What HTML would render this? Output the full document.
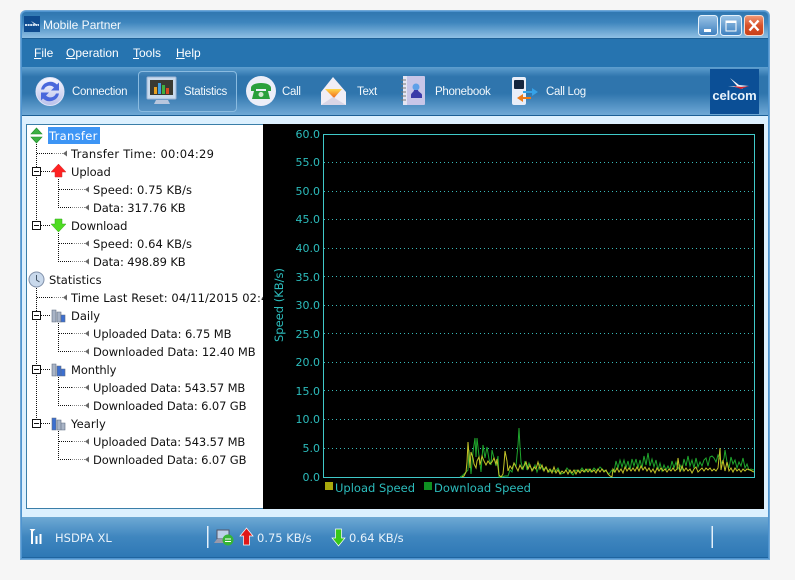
<!DOCTYPE html>
<html><head><meta charset="utf-8"><style>
html,body{margin:0;padding:0;width:795px;height:580px;overflow:hidden;background:#f6f6f6}
body{position:relative;font-family:"Liberation Sans",sans-serif}
div{position:absolute;box-sizing:border-box}
.t{white-space:nowrap;line-height:18px;height:18px;color:#111;font-family:"DejaVu Sans",sans-serif;font-size:11.5px}
.m{white-space:nowrap;color:#fff;font-size:12px;line-height:16px;top:45px}
.b{white-space:nowrap;color:#f2f8fc;font-size:11.5px;line-height:16px;top:84px;letter-spacing:-.3px}
.y{white-space:nowrap;color:#2cbcbc;font-family:"DejaVu Sans",sans-serif;font-size:11px;line-height:14px;width:60px;left:260px;text-align:right;margin-top:1px}
.l{font-size:11.5px;margin-top:0}
.s{white-space:nowrap;color:#e8f2fa;font-family:"DejaVu Sans",sans-serif;font-size:11.5px;line-height:16px;top:530px}
</style></head><body>
<div style="left:20px;top:10px;width:750px;height:550px;background:#4f94cf;border:1px solid #6fa7d6;border-radius:6px 6px 0 0"></div>
<div style="left:22px;top:12px;width:746px;height:26px;background:linear-gradient(#3077b0,#3d85bd 40%,#8fc0e4);border-radius:4px 4px 0 0"></div>
<div style="left:22px;top:38px;width:746px;height:1px;background:#1c5f95"></div>
<div style="left:22px;top:39px;width:746px;height:28px;background:#2674b0"></div>
<div style="left:22px;top:67px;width:746px;height:48px;background:linear-gradient(#5f9fcf,#2f75ad 20%,#2f75ad 55%,#6fa9d6)"></div>
<div style="left:22px;top:115px;width:746px;height:1px;background:#1c5f95"></div>
<div style="left:22px;top:116px;width:746px;height:401px;background:#dcf0fe"></div>
<div style="left:22px;top:517px;width:746px;height:41px;background:linear-gradient(#6ea9d4,#3f86bf 50%,#2e78b5);border-bottom:1px solid #1f649f"></div>
<div style="left:26px;top:124px;width:238px;height:385px;background:#fff;border:1px solid #3a7ea8;border-right:0"></div>
<div style="left:263px;top:124px;width:501px;height:385px;background:#000"></div>
<div style="left:138px;top:71px;width:99px;height:41px;border:1px solid #8abbe0;border-radius:4px;background:rgba(70,130,180,.35)"></div>
<div style="left:24px;top:16px;width:16px;height:16px;background:#0f4c90"></div>

<div class="m" style="left:43px;top:17px;color:#f4f9fd">Mobile Partner</div>
<div class="m" style="left:34px"><u>F</u>ile</div>
<div class="m" style="left:66px"><u>O</u>peration</div>
<div class="m" style="left:133px"><u>T</u>ools</div>
<div class="m" style="left:176px"><u>H</u>elp</div>
<div class="b" style="left:72px">Connection</div>
<div class="b" style="left:184px">Statistics</div>
<div class="b" style="left:282px">Call</div>
<div class="b" style="left:357px">Text</div>
<div class="b" style="left:435px">Phonebook</div>
<div class="b" style="left:546px">Call Log</div>

<div style="left:710px;top:69px;width:49px;height:45px;background:#0b4f96"></div>
<div style="left:710px;top:88px;width:49px;text-align:center;color:#e9f3fb;font-size:13px;line-height:16px;font-weight:bold;letter-spacing:-.1px">celcom</div>

<svg style="position:absolute;left:0;top:0" width="795" height="580" viewBox="0 0 795 580">
<defs>
<linearGradient id="gb" x1="0" y1="0" x2="0" y2="1"><stop offset="0" stop-color="#9cc4e6"/><stop offset="1" stop-color="#3c7fbf"/></linearGradient>
<linearGradient id="gr" x1="0" y1="0" x2="0" y2="1"><stop offset="0" stop-color="#f29a78"/><stop offset=".5" stop-color="#d8522a"/><stop offset="1" stop-color="#c93f17"/></linearGradient>
<linearGradient id="gs" x1="0" y1="0" x2="0" y2="1"><stop offset="0" stop-color="#f8f8ff"/><stop offset="1" stop-color="#b9c0ea"/></linearGradient>
<linearGradient id="ge" x1="0" y1="0" x2="0" y2="1"><stop offset="0" stop-color="#ffd84a"/><stop offset="1" stop-color="#f0661a"/></linearGradient>
</defs>
<!-- title logo -->
<path d="M31 21l5 3 3 1-4 0z" fill="#e8eef6"/>
<path d="M25 25h14" stroke="#cfe0f0" stroke-width="2" stroke-dasharray="2 .6"/>
<!-- window buttons -->
<rect x="698.500" y="15.500" width="19" height="20" rx="3" fill="url(#gb)" stroke="#e4f0fa"/>
<rect x="704" y="29" width="7" height="3" fill="#fff"/>
<rect x="720.500" y="15.500" width="21" height="20" rx="3" fill="url(#gb)" stroke="#e4f0fa"/>
<rect x="726" y="21" width="10" height="10" fill="none" stroke="#fff"/><rect x="726" y="21" width="10" height="2" fill="#fff"/>
<rect x="744.500" y="15.500" width="19" height="20" rx="3" fill="url(#gr)" stroke="#f3d9cf"/>
<path d="M749.500 20.500l9 10M758.500 20.500l-9 10" stroke="#fff" stroke-width="2.400"/>
<!-- connection -->
<circle cx="50" cy="91.500" r="14" fill="url(#gs)" stroke="#dfe3f7"/>
<path d="M41 89.500a9.500 9.500 0 0 1 16-5l2-2v8h-8l3-3a6 6 0 0 0-10 2z" fill="#4a68dc"/>
<path d="M59 93.500a9.500 9.500 0 0 1-16 5l-2 2v-8h8l-3 3a6 6 0 0 0 10-2z" fill="#4a68dc"/>
<!-- statistics -->
<rect x="147" y="77" width="29" height="22" rx="1" fill="#c9dbee" stroke="#9fb6d4"/>
<rect x="150" y="80" width="23" height="15" fill="#3a3a32"/>
<rect x="154" y="87" width="3" height="7" fill="#e8a020"/><rect x="158" y="83" width="3" height="11" fill="#3f9fe0"/><rect x="162" y="85" width="3" height="9" fill="#40b040"/><rect x="166" y="88" width="3" height="6" fill="#d84a20"/>
<path d="M156 100h12l2 4h-16z" fill="#b8c6dd"/>
<!-- call -->
<circle cx="261" cy="91" r="15" fill="#eceef8"/>
<path d="M251 88c0-3 4-5 10-5s10 2 10 5v3h-5v-2h-10v2h-5z" fill="#2aa03c"/>
<path d="M254 91h14l2 8h-18z" fill="#2aa03c"/>
<circle cx="261" cy="94.500" r="2.500" fill="#cfe8cf"/>
<!-- text -->
<path d="M321 92l12-15 13 15v13h-25z" fill="#f1eef6"/>
<path d="M325 89h17l-8 9z" fill="url(#ge)"/>
<path d="M321 105l12-8 13 8z" fill="#d9d6e6"/>
<!-- phonebook -->
<rect x="403" y="76" width="22" height="29" rx="1" fill="#c8c6e8"/>
<rect x="403" y="76" width="4" height="29" fill="#e5e5f2"/>
<path d="M401 80h5M401 84h5M401 88h5M401 92h5M401 96h5M401 100h5" stroke="#777" stroke-width="1"/>
<circle cx="416" cy="87" r="3.500" fill="#5fa0e8"/><path d="M411 98v-3c0-2 3-3 3-5h4c0 2 4 3 4 5v3z" fill="#3b3ba8"/>
<!-- call log -->
<rect x="512" y="77" width="14" height="28" rx="2" fill="#e9eef8"/>
<rect x="514" y="80" width="10" height="9" rx="1" fill="#15263f"/>
<path d="M523 91h9v-3l6 4-6 4v-3h-9z" fill="#35a2e8"/>
<path d="M531 97h-8v-3l-6 4 6 4v-3h8z" fill="#ee7a18"/>
<!-- celcom bird -->
<path d="M730 78l9 7 10 1-9 1 3 2-8-2-7 0 9-1z" fill="#f4f4f8"/>
<path d="M733 86l9 1 7-1-8 3z" fill="#d8202a"/>

<!-- tree lines -->
<g stroke="#111" fill="none" stroke-dasharray="1 1" shape-rendering="crispEdges">
<path d="M36.500 144V168M36.500 177V222M36.500 288V312M36.500 321V366M36.500 375V420"/>
<path d="M37 153.500H52"/><path d="M37 297.500H52"/>
<path d="M41 171.500H50M41 225.500H50M41 315.500H50M41 369.500H50M41 423.500H50"/>
<path d="M58.500 179V207.500H72M59 189.500H72M58.500 233V261.500H72M59 243.500H72M58.500 323V351.500H72M59 333.500H72M58.500 377V405.500H72M59 387.500H72M58.500 431V459.500H72M59 441.500H72"/>
</g>
<g stroke="#888" fill="none" stroke-dasharray="1 1" shape-rendering="crispEdges">
<path d="M52 153.500H63M52 297.500H63M72 189.500H85M72 207.500H85M72 243.500H85M72 261.500H85M72 333.500H85M72 351.500H85M72 387.500H85M72 405.500H85M72 441.500H85M72 459.500H85"/>
</g>
<g fill="#666">
<path d="M63 153.500l4-3v6zM63 297.500l4-3v6z"/>
<path d="M85 189.500l4-3v6zM85 207.500l4-3v6zM85 243.500l4-3v6zM85 261.500l4-3v6zM85 333.500l4-3v6zM85 351.500l4-3v6zM85 387.500l4-3v6zM85 405.500l4-3v6zM85 441.500l4-3v6zM85 459.500l4-3v6z"/>
</g>
<g fill="#fff" stroke="#111" shape-rendering="crispEdges">
<rect x="32.500" y="167.500" width="8" height="8"/><rect x="32.500" y="221.500" width="8" height="8"/><rect x="32.500" y="311.500" width="8" height="8"/><rect x="32.500" y="365.500" width="8" height="8"/><rect x="32.500" y="419.500" width="8" height="8"/>
<path d="M34 171.500h5M34 225.500h5M34 315.500h5M34 369.500h5M34 423.500h5" fill="none"/>
</g>
<!-- transfer icon -->
<path d="M36.500 128l5.500 6h-11z" fill="#3cb043" stroke="#1f8f2a" stroke-width=".6"/>
<path d="M36.500 143l5.500-6h-11z" fill="#3cb043" stroke="#1f8f2a" stroke-width=".6"/>
<!-- upload / download -->
<path d="M58.500 164l7.500 8h-4v5h-7v-5h-4z" fill="#f22" stroke="#c33" stroke-width=".5"/>
<path d="M58.500 232l7.500-8h-4v-5h-7v5h-4z" fill="#4fdc22" stroke="#2fa518" stroke-width=".5"/>
<!-- clock -->
<circle cx="36.500" cy="279.500" r="7.500" fill="#c9d9ec" stroke="#7f8fa8"/>
<path d="M36.500 275v5l3 2" stroke="#456" fill="none"/>
<!-- bar icons -->
<g stroke="#5f6b80" stroke-width=".6">
<path d="M52 322v-12h4v12zM57 322v-10h4v10z" fill="#a9b4c6"/><path d="M61 322v-7h4v7z" fill="#3c6fd0"/>
<path d="M52 376v-12h4v12z" fill="#a9b4c6"/><path d="M57 376v-10h4v10zM61 376v-7h4v7z" fill="#3c6fd0"/>
<path d="M52 430v-12h4v12z" fill="#3c6fd0"/><path d="M57 430v-10h4v10zM61 430v-7h4v7z" fill="#a9b4c6"/>
</g>

<!-- chart -->
<rect x="323.500" y="134.500" width="431" height="343" fill="none" stroke="#3fc9c9"/>
<g stroke="#39b8b8" stroke-dasharray="1 3" shape-rendering="crispEdges">
<path d="M324 162.500H754M324 191.500H754M324 219.500H754M324 248.500H754M324 276.500H754M324 305.500H754M324 333.500H754M324 362.500H754M324 390.500H754M324 419.500H754M324 448.500H754"/>
</g>
<polyline fill="none" stroke="#1fa52c" stroke-width="1" points="460,477 462,476 464,474 466,472 468,470 469,450 471,474 473,452 475,438 476,457 477,438 479,456 481,472 483,445 485,458 487,447 489,459 491,465 492,450 494,458 496,466 498,456 499,477 501,477 505,476 508,476 510,470 512,472 514,463 516,466 518,445 519,428 520,447 521,462 523,470 525,461 527,470 529,463 531,468 533,470 535,465 537,472 540,464 543,470 546,467 549,472 552,470 555,472 558,468 561,474 564,473 567,468 570,472 573,475 576,470 579,472 582,468 585,472 588,469 591,472 594,468 597,471 600,467 603,470 606,471 609,474 612,470 614,472 616,461 618,468 620,460 622,467 624,460 626,468 628,461 630,470 632,459 634,466 636,459 638,468 640,460 642,468 644,456 646,465 648,453 650,466 652,459 654,467 656,460 658,470 660,463 662,471 664,465 666,470 668,466 670,470 672,461 674,468 676,462 678,469 680,465 682,470 684,459 686,466 688,456 690,466 692,460 694,468 696,458 698,467 700,462 702,466 704,460 706,458 708,466 710,457 712,456 714,458 716,462 718,455 720,459 722,464 724,458 725,450 727,462 729,468 731,457 733,464 735,460 737,468 739,462 741,466 743,458 745,468 747,464 749,470 751,469 754,470"/>
<polyline fill="none" stroke="#c4c428" stroke-width="1" points="462,477 464,476 466,472 467,462 468,442 470,468 471,452 473,458 474,464 476,468 477,461 479,457 480,465 482,456 484,461 486,465 488,461 490,464 492,462 494,458 496,464 497,459 499,475 501,477 503,474 504,464 505,451 507,461 508,471 510,466 512,469 514,463 516,467 518,471 520,465 522,469 524,466 526,462 528,469 530,465 532,471 534,467 536,469 538,462 540,469 542,465 544,471 546,467 548,472 550,469 552,473 554,467 556,473 558,470 560,474 562,471 564,473 566,470 568,474 570,470 572,473 574,470 576,474 578,470 580,473 582,470 584,472 586,469 588,472 590,469 592,472 594,470 596,473 598,469 600,472 602,469 604,472 606,470 608,474 610,476 612,477 613,469 615,472 617,468 619,472 621,469 623,473 625,467 627,471 629,468 631,471 633,468 635,471 637,467 639,471 641,466 643,470 645,467 647,471 649,468 651,472 653,469 655,473 657,468 659,471 661,468 663,471 665,469 667,472 669,469 671,471 673,468 675,471 677,469 678,458 680,472 682,466 684,471 686,468 688,471 690,469 692,473 694,469 696,467 698,472 700,470 702,468 704,471 706,468 708,470 710,468 712,471 714,469 716,471 718,468 720,448 721,470 723,460 725,471 727,462 729,471 731,468 733,472 735,468 737,471 739,469 741,472 743,469 745,471 747,469 750,470 754,472"/>
<rect x="325" y="482" width="8" height="8" fill="#a8a80c"/>
<rect x="424" y="482" width="8" height="8" fill="#0f8f22"/>
<!-- status -->
<path d="M29.500 529h6l-3 3z" fill="#fff"/>
<path d="M32 530v14M36.500 544v-8M40.500 544v-10" stroke="#fff" stroke-width="2"/>
<rect x="207" y="526" width="1.500" height="22" fill="#e4f0fa"/>
<rect x="711.500" y="526" width="1.500" height="22" fill="#e4f0fa"/>
<rect x="217" y="530" width="12" height="9" fill="#bcd0e8" stroke="#556"/>
<path d="M214 543l3-4h12l2 4z" fill="#99a"/>
<circle cx="228" cy="540" r="5.500" fill="#36b536"/><path d="M225 539h6M225 541.500h6" stroke="#fff"/>
<path d="M246.500 528l6.500 8h-3.500v9h-6v-9h-3.500z" fill="#e01818" stroke="#fff" stroke-width=".7"/>
<path d="M338.500 546l6.500-8h-3.500v-9h-6v9h-3.500z" fill="#38c818" stroke="#fff" stroke-width=".7"/>
</svg>

<div style="left:48px;top:127px;width:52px;height:17px;background:#3d95f5"></div>
<div class="t" style="left:49px;top:127px;color:#fff;letter-spacing:.3px">Transfer</div>
<div class="t" style="left:71px;top:145px;letter-spacing:.26px">Transfer Time: 00:04:29</div>
<div class="t" style="left:71px;top:163px;letter-spacing:-.1px">Upload</div>
<div class="t" style="left:93px;top:181px;letter-spacing:.06px">Speed: 0.75 KB/s</div>
<div class="t" style="left:93px;top:199px;letter-spacing:-.12px">Data: 317.76 KB</div>
<div class="t" style="left:71px;top:217px;letter-spacing:-.1px">Download</div>
<div class="t" style="left:93px;top:235px;letter-spacing:.06px">Speed: 0.64 KB/s</div>
<div class="t" style="left:93px;top:253px;letter-spacing:-.12px">Data: 498.89 KB</div>
<div class="t" style="left:49px;top:271px">Statistics</div>
<div class="t" style="left:71px;top:289px;width:192px;overflow:hidden;letter-spacing:.08px">Time Last Reset: 04/11/2015 02:43:11</div>
<div class="t" style="left:71px;top:307px">Daily</div>
<div class="t" style="left:93px;top:325px;letter-spacing:-.09px">Uploaded Data: 6.75 MB</div>
<div class="t" style="left:93px;top:343px;letter-spacing:-.08px">Downloaded Data: 12.40 MB</div>
<div class="t" style="left:71px;top:361px;letter-spacing:-.1px">Monthly</div>
<div class="t" style="left:93px;top:379px;letter-spacing:-.12px">Uploaded Data: 543.57 MB</div>
<div class="t" style="left:93px;top:397px;letter-spacing:-.12px">Downloaded Data: 6.07 GB</div>
<div class="t" style="left:71px;top:415px;letter-spacing:.1px">Yearly</div>
<div class="t" style="left:93px;top:433px;letter-spacing:-.12px">Uploaded Data: 543.57 MB</div>
<div class="t" style="left:93px;top:451px;letter-spacing:-.12px">Downloaded Data: 6.07 GB</div>

<div class="y" style="top:127px">60.0</div>
<div class="y" style="top:155px">55.0</div>
<div class="y" style="top:184px">50.0</div>
<div class="y" style="top:212px">45.0</div>
<div class="y" style="top:241px">40.0</div>
<div class="y" style="top:270px">35.0</div>
<div class="y" style="top:298px">30.0</div>
<div class="y" style="top:327px">25.0</div>
<div class="y" style="top:355px">20.0</div>
<div class="y" style="top:384px">15.0</div>
<div class="y" style="top:412px">10.0</div>
<div class="y" style="top:441px">5.0</div>
<div class="y" style="top:470px">0.0</div>
<div class="y l" style="left:219px;top:298px;width:120px;text-align:center;transform:rotate(-90deg)">Speed (KB/s)</div>
<div class="y l" style="left:335px;top:481px;width:auto;text-align:left">Upload Speed</div>
<div class="y l" style="left:434px;top:481px;width:auto;text-align:left">Download Speed</div>

<div class="s" style="left:55px">HSDPA XL</div>
<div class="s" style="left:257px">0.75 KB/s</div>
<div class="s" style="left:349px">0.64 KB/s</div>
</body></html>
